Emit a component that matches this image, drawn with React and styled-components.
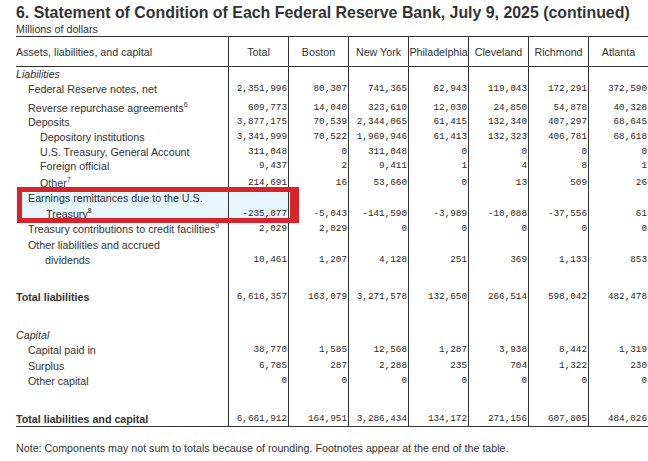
import React from 'react';
import styled, { createGlobalStyle } from 'styled-components';

const GlobalStyle = createGlobalStyle`
  body {
    margin: 0;
    background: #ffffff;
    font-family: "Liberation Sans", Arial, sans-serif;
    color: #333333;
  }
`;

const Page = styled.div`
  padding-left: 16px;
  width: 632px;
`;

const Title = styled.h1`
  margin: 3px 0 0;
  font-size: 15.9px;
  line-height: 20px;
  font-weight: bold;
  color: #333;
  white-space: nowrap;
`;

const Subtitle = styled.div`
  font-size: 10.7px;
  line-height: 13px;
`;

const Table = styled.div`
  position: relative;
  border-top: 1px solid #333;
  border-bottom: 1px solid #333;
`;

const Row = styled.div`
  display: grid;
  grid-template-columns: 212px repeat(7, 60px);
  height: ${p => p.h}px;
  border-bottom: ${p => (p.head ? '1px solid #333' : 'none')};
`;

const HeadCell = styled.div`
  display: flex;
  align-items: center;
  justify-content: ${p => (p.left ? 'flex-start' : 'center')};
  border-left: ${p => (p.left ? 'none' : '1px solid #333')};
  font-size: 10.7px;
  white-space: nowrap;
  overflow: hidden;
`;

const Label = styled.div`
  display: flex;
  align-items: flex-end;
  padding-left: ${p => p.indent}px;
  font-size: 10.7px;
  line-height: 14px;
  white-space: nowrap;
  font-style: ${p => (p.italic ? 'italic' : 'normal')};
  font-weight: ${p => (p.bold ? 'bold' : 'normal')};
  background: ${p => (p.hl ? '#e6f5fb' : 'transparent')};
`;

const Num = styled.div`
  display: flex;
  align-items: flex-end;
  justify-content: flex-end;
  padding-right: 1px;
  border-left: 1px solid #333;
  font-family: "Liberation Mono", "Courier New", monospace;
  font-size: 9.3px;
  line-height: 14px;
  color: #2a2a2a;
  background: ${p => (p.hl ? '#e6f5fb' : 'transparent')};
`;

const Sup = styled.sup`
  font-size: 7px;
  line-height: 0;
  vertical-align: 5px;
`;

const Callout = styled.div`
  position: absolute;
  left: 1px;
  top: 150px;
  width: 282px;
  height: 36px;
  box-sizing: border-box;
  border: 5px solid #d7232b;
  border-right-width: 9px;
  pointer-events: none;
`;

const Note = styled.p`
  margin: 14px 0 0;
  font-size: 10.7px;
  line-height: 14px;
  white-space: nowrap;
`;

const banks = ['Total', 'Boston', 'New York', 'Philadelphia', 'Cleveland', 'Richmond', 'Atlanta'];
const zeros = ['0', '0', '0', '0', '0', '0', '0'];

const rows = [
  { h: 14, label: 'Liabilities', indent: 0, italic: true },
  { h: 15, label: 'Federal Reserve notes, net', indent: 12, values: ['2,351,996', '80,307', '741,365', '62,943', '119,043', '172,291', '372,590'] },
  { h: 19, label: 'Reverse repurchase agreements', sup: '6', indent: 12, values: ['609,773', '14,040', '323,610', '12,030', '24,850', '54,878', '40,328'] },
  { h: 14, label: 'Deposits', indent: 12, values: ['3,877,175', '70,539', '2,344,065', '61,415', '132,340', '407,297', '68,645'] },
  { h: 15, label: 'Depository institutions', indent: 24, values: ['3,341,999', '70,522', '1,969,946', '61,413', '132,323', '406,781', '68,618'] },
  { h: 15, label: 'U.S. Treasury, General Account', indent: 24, values: ['311,048', '0', '311,048', '0', '0', '0', '0'] },
  { h: 14, label: 'Foreign official', indent: 24, values: ['9,437', '2', '9,411', '1', '4', '8', '1'] },
  { h: 17, label: 'Other', sup: '7', indent: 24, values: ['214,691', '16', '53,660', '0', '13', '509', '26'] },
  { h: 15, label: 'Earnings remittances due to the U.S.', indent: 12, hl: true },
  { h: 16, label: 'Treasury', sup: '8', indent: 30, hl: true, values: ['-235,077', '-5,043', '-141,590', '-3,989', '-10,088', '-37,556', '61'] },
  { h: 15, label: 'Treasury contributions to credit facilities', sup: '9', indent: 12, values: ['2,029', '2,029', '0', '0', '0', '0', '0'] },
  { h: 16, label: 'Other liabilities and accrued', indent: 12 },
  { h: 15, label: 'dividends', indent: 29, values: ['10,461', '1,207', '4,128', '251', '369', '1,133', '853'] },
  { h: 37, label: 'Total liabilities', indent: 0, bold: true, values: ['6,616,357', '163,079', '3,271,578', '132,650', '266,514', '598,042', '482,478'] },
  { h: 38, label: 'Capital', indent: 0, italic: true },
  { h: 15, label: 'Capital paid in', indent: 12, values: ['38,770', '1,585', '12,568', '1,287', '3,938', '8,442', '1,319'] },
  { h: 16, label: 'Surplus', indent: 12, values: ['6,785', '287', '2,288', '235', '704', '1,322', '230'] },
  { h: 15, label: 'Other capital', indent: 12, values: zeros },
  { h: 38, label: 'Total liabilities and capital', indent: 0, bold: true, values: ['6,661,912', '164,951', '3,286,434', '134,172', '271,156', '607,805', '484,026'] },
];

export default function App() {
  return (
    <>
      <GlobalStyle />
      <Page>
        <Title>6. Statement of Condition of Each Federal Reserve Bank, July 9, 2025 (continued)</Title>
        <Subtitle>Millions of dollars</Subtitle>
        <Table>
          <Row h={29} head>
            <HeadCell left>Assets, liabilities, and capital</HeadCell>
            {banks.map(b => (
              <HeadCell key={b}>{b}</HeadCell>
            ))}
          </Row>
          {rows.map((r, i) => (
            <Row key={i} h={r.h}>
              <Label indent={r.indent} italic={r.italic} bold={r.bold} hl={r.hl}>
                <span>
                  {r.label}
                  {r.sup && <Sup>{r.sup}</Sup>}
                </span>
              </Label>
              {(r.values || ['', '', '', '', '', '', '']).map((v, j) => (
                <Num key={j} hl={r.hl && j === 0}>{v}</Num>
              ))}
            </Row>
          ))}
          <Callout />
        </Table>
        <Note>Note: Components may not sum to totals because of rounding. Footnotes appear at the end of the table.</Note>
      </Page>
    </>
  );
}
